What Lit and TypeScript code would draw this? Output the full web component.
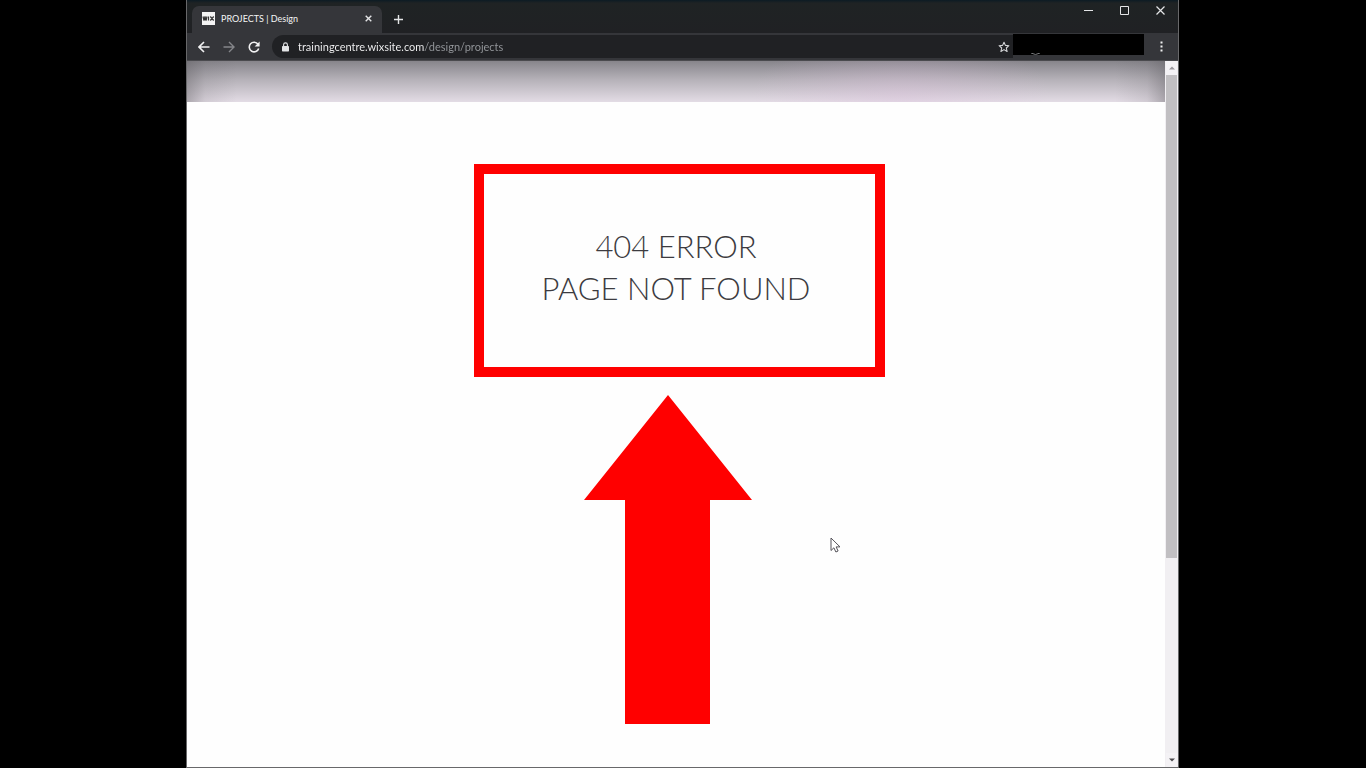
import { LitElement, html, css } from "lit";
import { customElement } from "lit/decorators.js";

@customElement("browser-tabs")
class BrowserTabs extends LitElement {
  static styles = css`
    :host {
      display: flex;
      height: 33px;
      padding-left: 5px;
      background: linear-gradient(#0c1b24, #1f2324 3px, #202124);
      font-family: Lato, "Open Sans", sans-serif;
    }
    button {
      display: grid;
      place-items: center;
      padding: 0;
      border: 0;
      background: none;
      color: #e4e5e7;
    }
    svg { display: block; }
    .tab {
      display: flex;
      align-items: center;
      box-sizing: border-box;
      width: 190px;
      margin-top: 6px;
      padding: 0 7px 2px 10px;
      border-radius: 7px 7px 0 0;
      background: #35363a;
    }
    .favicon { margin-right: 6px; }
    .title {
      flex: 1;
      color: #f4f5f5;
      font-size: 9px;
      line-height: 14px;
      white-space: nowrap;
    }
    .close { width: 14px; height: 14px; }
    .add { width: 20px; height: 20px; margin: 9px 0 0 6px; }
    .controls { display: flex; margin-left: auto; }
    .controls button { width: 36px; height: 21px; }
  `;

  render() {
    return html`
      <div class="tab">
        <svg class="favicon" width="13" height="13" viewBox="0 0 13 13" aria-hidden="true">
          <rect width="13" height="13" fill="#f4f4f4" />
          <path d="M1 4.5l1 4 1-4 1 4 1-4M6.5 4.5v4M8.3 4.5l3.4 4M11.7 4.5l-3.4 4" fill="none" stroke="#333" stroke-width="1.2" />
        </svg>
        <span class="title">PROJECTS | Design</span>
        <button class="close" aria-label="Close tab">
          <svg width="7" height="7" viewBox="0 0 7 7"><path d="M.7.7l5.6 5.6M6.3.7L.7 6.3" stroke="currentColor" stroke-width="1.4" /></svg>
        </button>
      </div>
      <button class="add" aria-label="New tab">
        <svg width="9" height="9" viewBox="0 0 9 9"><path d="M4.5 0v9M0 4.5h9" stroke="currentColor" stroke-width="1.4" /></svg>
      </button>
      <div class="controls">
        <button aria-label="Minimize">
          <svg width="9" height="9" viewBox="0 0 9 9"><path d="M0 4.5h9" stroke="currentColor" /></svg>
        </button>
        <button aria-label="Maximize">
          <svg width="9" height="9" viewBox="0 0 9 9"><path d="M.5.5h8v8h-8z" fill="none" stroke="currentColor" /></svg>
        </button>
        <button aria-label="Close window">
          <svg width="9" height="9" viewBox="0 0 9 9"><path d="M.5.5l8 8M8.5.5l-8 8" stroke="currentColor" stroke-width="1.2" /></svg>
        </button>
      </div>
    `;
  }
}

@customElement("browser-toolbar")
class BrowserToolbar extends LitElement {
  static styles = css`
    :host {
      display: flex;
      align-items: center;
      box-sizing: border-box;
      height: 28px;
      padding-left: 4px;
      border-bottom: 1px solid #4a4a4e;
      background: #35363a;
    }
    button {
      display: grid;
      place-items: center;
      flex: none;
      width: 25px;
      height: 24px;
      padding: 0;
      border: 0;
      background: none;
      color: #f1f1f2;
    }
    button:disabled { color: #85868a; }
    svg { display: block; }
    .address {
      display: flex;
      flex: 1;
      align-items: center;
      height: 23px;
      margin-left: 6px;
      padding-left: 9px;
      border-radius: 12px 0 0 12px;
      background: #202124;
      color: #e3e4e6;
    }
    .address input {
      flex: 1;
      min-width: 0;
      height: 20px;
      margin-left: 8px;
      padding: 0;
      border: 0;
      outline: 0;
      background: linear-gradient(90deg, #f8f8f9 127px, #96999d 127px);
      background-clip: text;
      -webkit-background-clip: text;
      color: transparent;
      font: 11px/20px Lato, "Open Sans", sans-serif;
    }
    .address button { width: 18px; color: #d5d6d8; }
    .extensions {
      flex: none;
      align-self: flex-start;
      display: flex;
      align-items: flex-end;
      box-sizing: border-box;
      width: 131px;
      height: 21px;
      margin-top: 1px;
      padding-left: 18px;
      background: #000;
    }
    .more { width: 34px; }
  `;

  render() {
    return html`
      <button aria-label="Back">
        <svg width="12" height="12" viewBox="0 0 12 12"><path d="M11.5 6H1.2M6 1L1 6l5 5" fill="none" stroke="currentColor" stroke-width="1.6" /></svg>
      </button>
      <button aria-label="Forward" disabled>
        <svg width="12" height="12" viewBox="0 0 12 12"><path d="M.5 6h10.3M6 1l5 5-5 5" fill="none" stroke="currentColor" stroke-width="1.4" /></svg>
      </button>
      <button aria-label="Reload">
        <svg width="12" height="12" viewBox="0 0 12 12">
          <path d="M10 3.2A4.8 4.8 0 1 0 10.7 7.4" fill="none" stroke="currentColor" stroke-width="1.6" />
          <path d="M11.6.5v5H6.6z" fill="currentColor" />
        </svg>
      </button>
      <div class="address">
        <svg width="9" height="10" viewBox="0 0 9 10" aria-hidden="true">
          <rect x="1" y="4" width="7" height="5.5" rx=".7" fill="currentColor" />
          <path d="M2.6 4.2V2.8a1.9 1.9 0 0 1 3.8 0v1.4" fill="none" stroke="currentColor" stroke-width="1.1" />
        </svg>
        <input type="text" aria-label="Address" spellcheck="false" value="trainingcentre.wixsite.com/design/projects" />
        <button aria-label="Bookmark this page">
          <svg width="12" height="12" viewBox="0 0 12 12">
            <path d="M6 1.2l1.4 3.2 3.5.3-2.6 2.3.8 3.5L6 8.6l-3.1 1.9.8-3.5L1.1 4.7l3.5-.3z" fill="none" stroke="currentColor" stroke-width="1.1" stroke-linejoin="round" />
          </svg>
        </button>
      </div>
      <div class="extensions">
        <svg width="9" height="2" viewBox="0 0 9 2" aria-hidden="true"><path d="M0 0q4.5 3 9 0" fill="none" stroke="#77787b" /></svg>
      </div>
      <button class="more" aria-label="Menu">
        <svg width="3" height="11" viewBox="0 0 3 11"><path d="M.5.5h2v2h-2zM.5 4.5h2v2h-2zM.5 8.5h2v2h-2z" fill="currentColor" /></svg>
      </button>
    `;
  }
}

@customElement("page-scrollbar")
class PageScrollbar extends LitElement {
  static styles = css`
    :host {
      display: flex;
      flex-direction: column;
      flex: none;
      box-sizing: border-box;
      width: 13px;
      padding: 0 1px;
      background: #f1eff2;
    }
    button {
      display: grid;
      place-items: center;
      width: 100%;
      height: 14px;
      padding: 0;
      border: 0;
      background: #f4f2f5;
      color: #99969b;
    }
    .down { color: #4c4a4e; }
    .track { flex: 1; }
    .thumb { height: 71.2%; background: #c1bfc2; }
  `;

  render() {
    return html`
      <button aria-label="Scroll up">
        <svg width="6" height="4" viewBox="0 0 6 4"><path d="M0 3.5L3 .5l3 3z" fill="currentColor" /></svg>
      </button>
      <div class="track"><div class="thumb"></div></div>
      <button class="down" aria-label="Scroll down">
        <svg width="6" height="4" viewBox="0 0 6 4"><path d="M0 .5h6l-3 3z" fill="currentColor" /></svg>
      </button>
    `;
  }
}

@customElement("app-root")
class AppRoot extends LitElement {
  static styles = css`
    :host {
      display: block;
      box-sizing: border-box;
      height: 100vh;
      padding: 0 187px 0 186px;
      background: #000;
    }
    .window {
      display: flex;
      flex-direction: column;
      box-sizing: border-box;
      height: 100%;
      border: 1px solid #68686a;
      border-top: 0;
    }
    .viewport {
      display: flex;
      flex: 1;
      min-height: 0;
    }
    .page {
      position: relative;
      flex: 1;
      background: #fefefe;
    }
    .banner {
      height: 41px;
      background:
        linear-gradient(90deg, rgba(90, 88, 92, 0.4), rgba(90, 88, 92, 0.12) 18px, transparent 50px, transparent calc(100% - 50px), rgba(90, 88, 92, 0.12) calc(100% - 18px), rgba(90, 88, 92, 0.4)),
        radial-gradient(ellipse 150px 60px at 73% 80%, rgba(220, 190, 220, 0.35), transparent),
        linear-gradient(#87858b, #b5b1b8 45%, #e3dce5);
    }
    h1 {
      margin: 0;
      padding-top: 123px;
      color: #3c3b40;
      font: 300 31px/42px Lato, sans-serif;
      text-align: center;
    }
    .frame,
    .arrow,
    .cursor {
      position: absolute;
    }
    .frame {
      top: 103px;
      left: calc(50% - 202px);
      box-sizing: border-box;
      width: 411px;
      height: 213px;
      border: 10px solid #f00;
    }
    .arrow {
      top: 334px;
      left: calc(50% - 92px);
    }
    .cursor {
      top: 476px;
      left: calc(50% + 154px);
    }
  `;

  render() {
    return html`
      <div class="window">
        <browser-tabs></browser-tabs>
        <browser-toolbar></browser-toolbar>
        <div class="viewport">
          <main class="page">
            <div class="banner"></div>
            <h1>404 ERROR<br />PAGE NOT FOUND</h1>
            <div class="frame"></div>
            <svg class="arrow" width="168" height="329" viewBox="0 0 168 329" aria-hidden="true">
              <path d="M84 0l84 105h-42v224H41V105H0z" fill="#f00" />
            </svg>
            <svg class="cursor" width="11" height="16" viewBox="0 0 11 16" aria-hidden="true">
              <path d="M1 1v12.5l2.9-2.7 2 4.2 2.2-1-2-4.1h3.9z" fill="#fff" stroke="#55535a" />
            </svg>
          </main>
          <page-scrollbar></page-scrollbar>
        </div>
      </div>
    `;
  }
}
